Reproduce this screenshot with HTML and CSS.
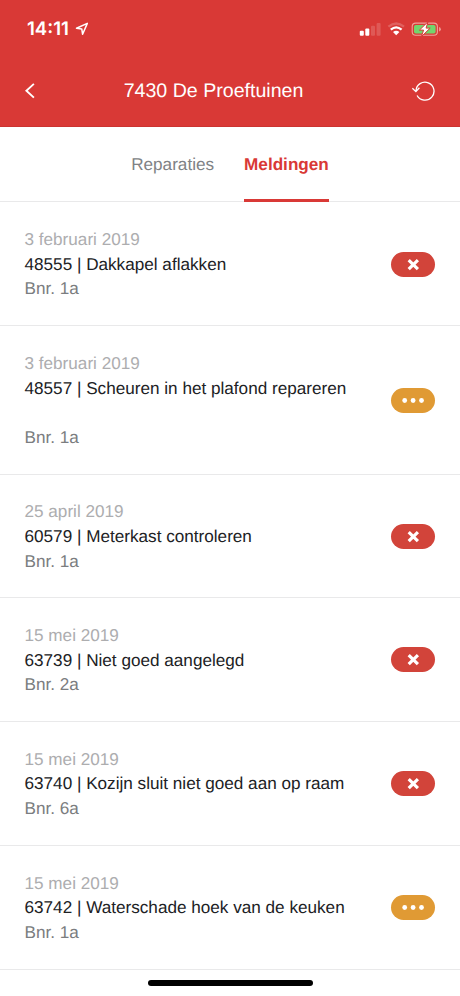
FILE: index.html
```html
<!DOCTYPE html>
<html lang="nl">
<head>
<meta charset="utf-8">
<meta name="viewport" content="width=device-width, initial-scale=1">
<title>7430 De Proeftuinen</title>
<link rel="stylesheet" href="styles.css">
</head>
<body>
<svg width="0" height="0" class="defs" aria-hidden="true">
  <symbol id="cross" viewBox="0 0 44 25"><path d="M17.7 8.1L26.9 17.1M26.9 8.1L17.7 17.1" stroke="#fff" stroke-width="3.2" fill="none"/></symbol>
  <symbol id="dots" viewBox="0 0 44 25"><g fill="#fff"><circle cx="13.7" cy="12.5" r="2.4"/><circle cx="22.1" cy="12.5" r="2.4"/><circle cx="30.5" cy="12.5" r="2.4"/></g></symbol>
</svg>
<header class="header">
  <div class="status">
    <span class="time">14:11</span>
    <svg class="location" width="14" height="14" viewBox="0 0 14 14"><path d="M1.5 6.3L12.3 1.4L7.6 12.3L6.8 7.1Z" fill="none" stroke="#fff" stroke-width="1.5" stroke-linejoin="round"/></svg>
    <svg class="indicators" width="84" height="20" viewBox="0 0 84 20">
      <g fill="#fff"><rect x=".8" y="11.8" width="4" height="5" rx="1"/><rect x="6.3" y="9.4" width="4" height="7.4" rx="1"/><g opacity=".16"><rect x="12" y="6.8" width="4" height="10" rx="1"/><rect x="17.6" y="4" width="4" height="12.8" rx="1"/></g></g>
      <g fill="none" stroke="#fff" stroke-width="2.3"><path d="M29.4 7.7Q37.2 1.2 45 7.7" opacity=".2"/><path d="M31.8 10.6Q37.2 6.1 42.6 10.6"/></g>
      <path d="M34 13Q37.2 10.5 40.4 13L37.2 16.3Z" fill="#fff"/>
      <rect x="53.2" y="4.1" width="25.2" height="12.2" rx="3.5" fill="none" stroke="#f0a09a" stroke-width="1.1"/>
      <rect x="55" y="5.9" width="21.6" height="8.6" rx="1.8" fill="#72d56d"/>
      <path d="M80.1 8v4.5q1.7-.6 1.7-2.25T80.1 8Z" fill="#f0a09a"/>
      <path d="M69 2.8L60.4 11.1H64.6L62.4 17.6L71.2 9.1H67.1Z" fill="#fff" stroke="#d93936" stroke-width="1"/>
    </svg>
  </div>
  <div class="navbar">
    <svg class="back" width="24" height="24" viewBox="0 0 24 24"><path d="M15.9 4.9L8.4 11.7L15.9 18.6" fill="none" stroke="#fff" stroke-width="1.9"/></svg>
    <h1 class="title">7430 De Proeftuinen</h1>
    <svg class="refresh" width="24" height="24" viewBox="0 0 24 24"><path d="M5 11.9A9 9 0 1 1 6.1 16.5M1.4 9.2L4.9 12.6L8.4 8.8" fill="none" stroke="#fff" stroke-width="1.3"/></svg>
  </div>
</header>
<nav class="tabs">
  <a class="tab">Reparaties</a>
  <a class="tab active">Meldingen</a>
</nav>
<main class="list">
  <article class="row"><div class="info"><p class="date">3 februari 2019</p><p class="name">48555 | Dakkapel aflakken</p><p class="unit">Bnr. 1a</p></div><svg class="badge rejected"><use href="#cross"/></svg></article>
  <article class="row"><div class="info"><p class="date">3 februari 2019</p><p class="name two-line">48557 | Scheuren in het plafond repareren</p><p class="unit">Bnr. 1a</p></div><svg class="badge pending"><use href="#dots"/></svg></article>
  <article class="row"><div class="info"><p class="date">25 april 2019</p><p class="name">60579 | Meterkast controleren</p><p class="unit">Bnr. 1a</p></div><svg class="badge rejected"><use href="#cross"/></svg></article>
  <article class="row"><div class="info"><p class="date">15 mei 2019</p><p class="name">63739 | Niet goed aangelegd</p><p class="unit">Bnr. 2a</p></div><svg class="badge rejected"><use href="#cross"/></svg></article>
  <article class="row"><div class="info"><p class="date">15 mei 2019</p><p class="name">63740 | Kozijn sluit niet goed aan op raam</p><p class="unit">Bnr. 6a</p></div><svg class="badge rejected"><use href="#cross"/></svg></article>
  <article class="row"><div class="info"><p class="date">15 mei 2019</p><p class="name">63742 | Waterschade hoek van de keuken</p><p class="unit">Bnr. 1a</p></div><svg class="badge pending"><use href="#dots"/></svg></article>
</main>
<footer class="home"><div class="home-bar"></div></footer>
</body>
</html>
```
FILE: styles.css
```css
* { box-sizing: border-box; margin: 0; padding: 0; }
body {
  width: 460px;
  height: 996px;
  overflow: hidden;
  background: #fff;
  font-family: "Liberation Sans", Arial, sans-serif;
  font-size: 17.15px;
  text-rendering: geometricPrecision;
}
.defs { display: none; }
svg { display: block; flex: none; }
.header {
  height: 127.4px;
  background: #d93936;
  border-bottom: 1px solid #cb3431;
  color: #fff;
}
.status {
  display: flex;
  align-items: center;
  height: 55px;
  padding: 2px 17px 0 27px;
}
.time {
  width: 44px;
  font: 600 18.6px/22px Inter, sans-serif;
  white-space: nowrap;
}
.location { margin-left: 4px; }
.indicators { margin-left: auto; }
.navbar {
  display: flex;
  align-items: center;
  justify-content: space-between;
  height: 71px;
  padding: 0 25px 0 18px;
}
.title { font-size: 19.6px; font-weight: 400; line-height: 24px; padding-right: 26px; }
.tabs {
  display: flex;
  justify-content: center;
  gap: 30px;
  height: 75px;
  border-bottom: 1px solid #e9e9ea;
}
.tab {
  height: 75px;
  padding-top: 25px;
  line-height: 25px;
  color: #808285;
}
.active {
  color: #d93936;
  font-weight: 700;
  border-bottom: 3px solid #d93936;
}
.row {
  display: flex;
  align-items: center;
  justify-content: space-between;
  padding: 24.8px 25px 24.2px 24.5px;
  border-bottom: 1px solid #e9e9ea;
}
.info { line-height: 24.6px; white-space: nowrap; }
.date { color: #adadaf; }
.name { color: #202124; }
.two-line { height: 49.2px; }
.unit { color: #7b7d80; }
.badge { width: 44px; height: 25px; border-radius: 13px; }
.rejected { background: #d2443a; }
.pending { background: #e09a34; }
.home { display: flex; justify-content: center; padding-top: 10px; }
.home-bar { width: 165px; height: 6.5px; border-radius: 4px; background: #000; }
```
